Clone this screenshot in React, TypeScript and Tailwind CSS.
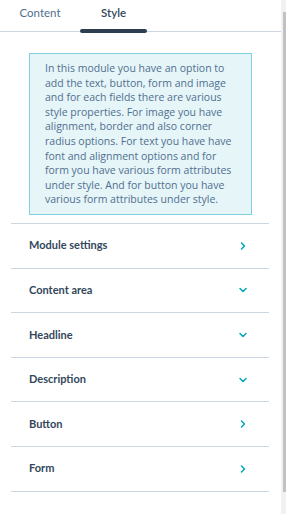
import { ChevronRight, ChevronDown } from "lucide-react";

const rows: { label: string; open: boolean }[] = [
  { label: "Module settings", open: false },
  { label: "Content area", open: true },
  { label: "Headline", open: true },
  { label: "Description", open: true },
  { label: "Button", open: false },
  { label: "Form", open: false },
];

export default function App() {
  return (
    <div className="flex h-[514px] w-[286px] bg-white font-['Lato',sans-serif] text-[#33475b]">
      <div className="flex-1">
        {/* tabs */}
        <div className="flex h-[32px] border-b border-[#cbd6e2]">
          <div className="flex w-[80px] items-center justify-center pb-[6px] text-[11.5px] text-[#516f90]">
            Content
          </div>
          <div className="relative flex w-[67px] items-center justify-center pb-[6px] text-[11.5px] font-semibold text-[#33475b]">
            Style
            <span className="absolute -bottom-[2px] left-0 h-[4px] w-full rounded-full bg-[#2d3e50]" />
          </div>
        </div>

        {/* info */}
        <div className="px-[29px] pt-[21px] pb-[8px]">
          <div className="border border-[#7fd1de] bg-[#e5f5f8] py-[7px] pl-[15px] pr-[11px] font-['Open_Sans',sans-serif] text-[10.5px] leading-[14.6px] text-[#516f90]">
            In this module you have an option to add the text, button, form and image and for each fields there are various style properties. For image you have alignment, border and also corner radius options. For text you have have font and alignment options and for form you have various form attributes under style. And for button you have various form attributes under style.
          </div>
        </div>

        {/* sections */}
        <div className="ml-[11px] mr-[12px]">
          {rows.map((r) => (
            <div
              key={r.label}
              className="flex h-[44.6px] items-center justify-between border-t border-[#cbd6e2] pl-[18px] pr-[20px] text-[11px] font-bold"
            >
              <span>{r.label}</span>
              {r.open ? (
                <ChevronDown size={12} strokeWidth={3} className="text-[#00a4bd]" />
              ) : (
                <ChevronRight size={12} strokeWidth={3} className="text-[#00a4bd]" />
              )}
            </div>
          ))}
          <div className="border-t border-[#cbd6e2]" />
        </div>
      </div>

      {/* scrollbar */}
      <div className="flex w-[5px] flex-col bg-[#f1f1f1] pt-[12px] pb-[22px]">
        <div className="ml-[2px] flex-1 bg-[#c1c1c1]" />
      </div>
    </div>
  );
}
